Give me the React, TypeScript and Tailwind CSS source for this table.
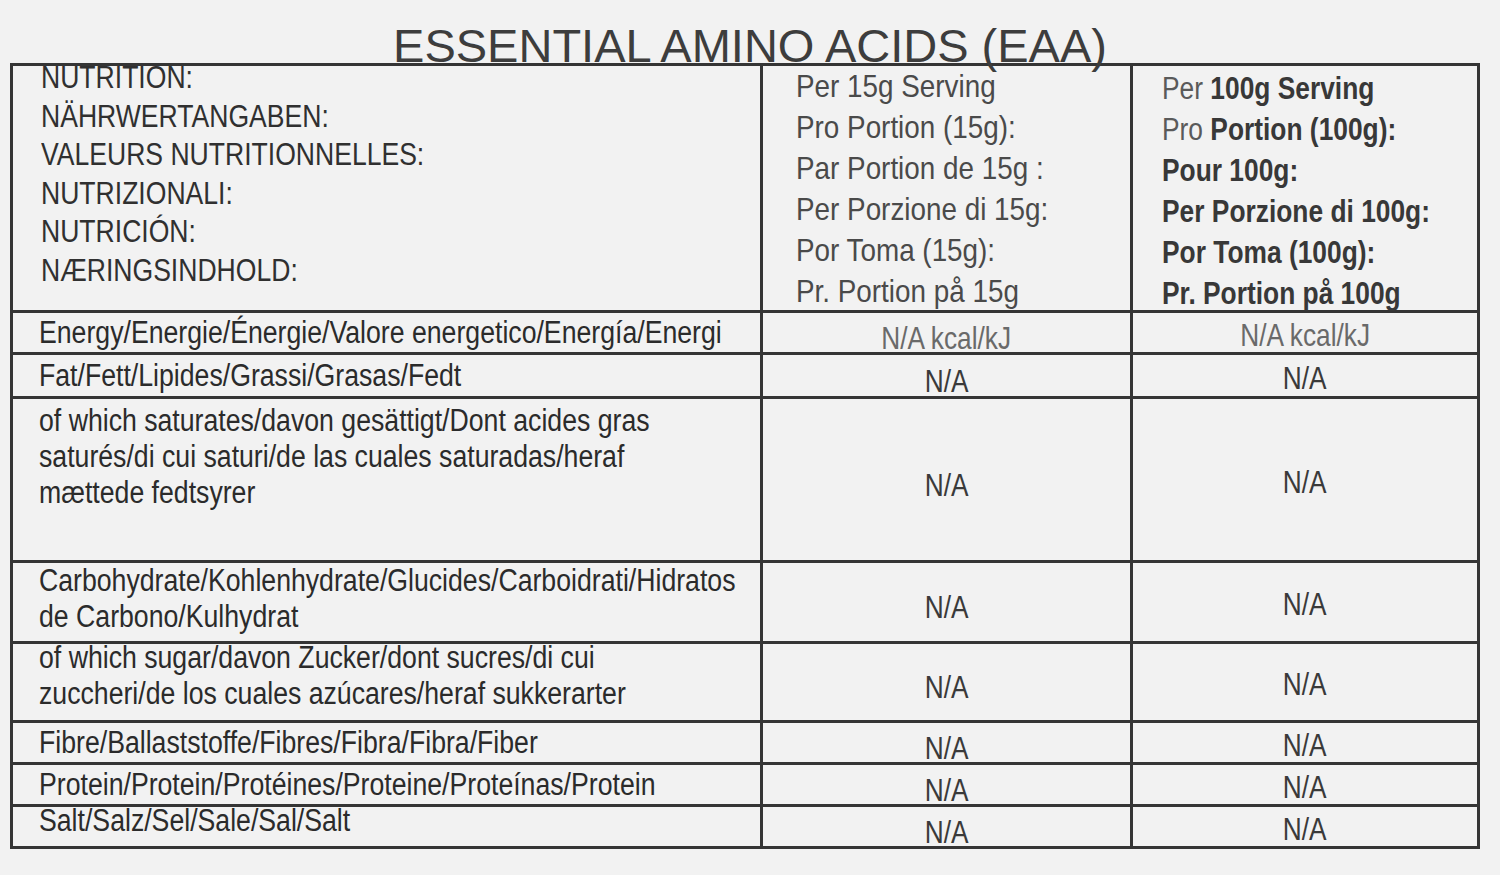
type Row = {
  label: string[];
  labelCls: string;
  h: string;
  mid: string;
  right: string;
};

const FONT = { fontFamily: '"Liberation Sans", Arial, sans-serif' };

const ROWS: Row[] = [
  {
    label: ["Energy/Energie/Énergie/Valore energetico/Energía/Energi"],
    labelCls: "items-center",
    h: "h-[42px]",
    mid: "N/A kcal/kJ",
    right: "N/A kcal/kJ",
  },
  {
    label: ["Fat/Fett/Lipides/Grassi/Grasas/Fedt"],
    labelCls: "items-center",
    h: "h-[44px]",
    mid: "N/A",
    right: "N/A",
  },
  {
    label: [
      "of which saturates/davon gesättigt/Dont acides gras",
      "saturés/di cui saturi/de las cuales saturadas/heraf",
      "mættede fedtsyrer",
    ],
    labelCls: "items-start pt-[4px] leading-[37px]",
    h: "h-[164px]",
    mid: "N/A",
    right: "N/A",
  },
  {
    label: [
      "Carbohydrate/Kohlenhydrate/Glucides/Carboidrati/Hidratos",
      "de Carbono/Kulhydrat",
    ],
    labelCls: "items-start pt-0 leading-[32px]",
    h: "h-[81px]",
    mid: "N/A",
    right: "N/A",
  },
  {
    label: [
      "of which sugar/davon Zucker/dont sucres/di cui",
      "zuccheri/de los cuales azúcares/heraf sukkerarter",
    ],
    labelCls: "items-start -mt-[4px] leading-[38px]",
    h: "h-[79px]",
    mid: "N/A",
    right: "N/A",
  },
  {
    label: ["Fibre/Ballaststoffe/Fibres/Fibra/Fibra/Fiber"],
    labelCls: "items-center",
    h: "h-[42px]",
    mid: "N/A",
    right: "N/A",
  },
  {
    label: ["Protein/Protein/Protéines/Proteine/Proteínas/Protein"],
    labelCls: "items-center",
    h: "h-[42px]",
    mid: "N/A",
    right: "N/A",
  },
  {
    label: ["Salt/Salz/Sel/Sale/Sal/Salt"],
    labelCls: "items-center pb-[12px]",
    h: "h-[42px]",
    mid: "N/A",
    right: "N/A",
  },
];

const HEAD_LEFT = [
  "NUTRITION:",
  "NÄHRWERTANGABEN:",
  "VALEURS NUTRITIONNELLES:",
  "NUTRIZIONALI:",
  "NUTRICIÓN:",
  "NÆRINGSINDHOLD:",
];

const HEAD_MID = [
  "Per 15g Serving",
  "Pro Portion (15g):",
  "Par Portion de 15g :",
  "Per Porzione di 15g:",
  "Por Toma (15g):",
  "Pr. Portion på 15g",
];

const HEAD_RIGHT: [string, string][] = [
  ["Per ", "100g Serving"],
  ["Pro ", "Portion (100g):"],
  ["", "Pour 100g:"],
  ["", "Per Porzione di 100g:"],
  ["", "Por Toma (100g):"],
  ["", "Pr. Portion på 100g"],
];

function Value({ text, pad }: { text: string; pad: string }) {
  const light = text.includes("kcal");
  return (
    <div className={`flex h-full items-center justify-center ${pad}`}>
      <span
        className={`inline-block origin-center scale-x-[0.82] whitespace-nowrap text-[32px] leading-none ${
          light ? "text-[#6a6a6a]" : "text-[#3a3a3a]"
        }`}
      >
        {text}
      </span>
    </div>
  );
}

export default function App() {
  return (
    <div
      className="h-[875px] w-[1500px] overflow-hidden bg-[#f2f2f2] text-[#2b2b2b]"
      style={FONT}
    >
      {/* Title sits on the table's top rule */}
      <div className="relative z-10 -mb-[3px] flex justify-center pt-[26px]">
        <span className="block whitespace-nowrap text-[47px] leading-[40px] text-[#3d3d3d]">
          ESSENTIAL AMINO ACIDS (EAA)
        </span>
      </div>

      <div className="ml-[10px] grid w-[1470px] grid-cols-[750px_370px_347px] border-l-[3px] border-t-[3px] border-[#353535]">
        {/* Header row */}
        <div className="h-[247px] border-b-[3px] border-r-[3px] border-[#353535] pl-[28px]">
          <div className="-mt-[8px] flex flex-col text-[32px] leading-[38.5px] text-[#303030]">
            {HEAD_LEFT.map((t) => (
              <span key={t} className="inline-block origin-left scale-x-[0.83] whitespace-nowrap">
                {t}
              </span>
            ))}
          </div>
        </div>
        <div className="h-[247px] border-b-[3px] border-r-[3px] border-[#353535] pl-[33px]">
          <div className="flex flex-col text-[32px] leading-[41px] text-[#4a4a4a]">
            {HEAD_MID.map((t) => (
              <span key={t} className="inline-block origin-left scale-x-[0.87] whitespace-nowrap">
                {t}
              </span>
            ))}
          </div>
        </div>
        <div className="h-[247px] border-b-[3px] border-r-[3px] border-[#353535] pl-[29px] pt-[2px]">
          <div className="flex flex-col text-[31px] leading-[41px] text-[#383838]">
            {HEAD_RIGHT.map(([a, b]) => (
              <span key={b} className="inline-block origin-left scale-x-[0.85] whitespace-nowrap">
                {a && <span className="font-normal text-[#5a5a5a]">{a}</span>}
                <span className="font-bold">{b}</span>
              </span>
            ))}
          </div>
        </div>

        {/* Nutrient rows */}
        {ROWS.map((r) => (
          <div key={r.label[0]} className="contents">
            <div className={`${r.h} border-b-[3px] border-r-[3px] border-[#353535] pl-[26px]`}>
              <div className={`flex h-full ${r.labelCls}`}>
                <div className="flex flex-col text-[31px] leading-[36px] text-[#2b2b2b]">
                  {r.label.map((t) => (
                    <span key={t} className="inline-block origin-left scale-x-[0.86] whitespace-nowrap">
                      {t}
                    </span>
                  ))}
                </div>
              </div>
            </div>
            <div className={`${r.h} border-b-[3px] border-r-[3px] border-[#353535]`}>
              <Value text={r.mid} pad="pt-[10px]" />
            </div>
            <div className={`${r.h} border-b-[3px] border-r-[3px] border-[#353535]`}>
              <Value text={r.right} pad="pt-[4px]" />
            </div>
          </div>
        ))}
      </div>
    </div>
  );
}
